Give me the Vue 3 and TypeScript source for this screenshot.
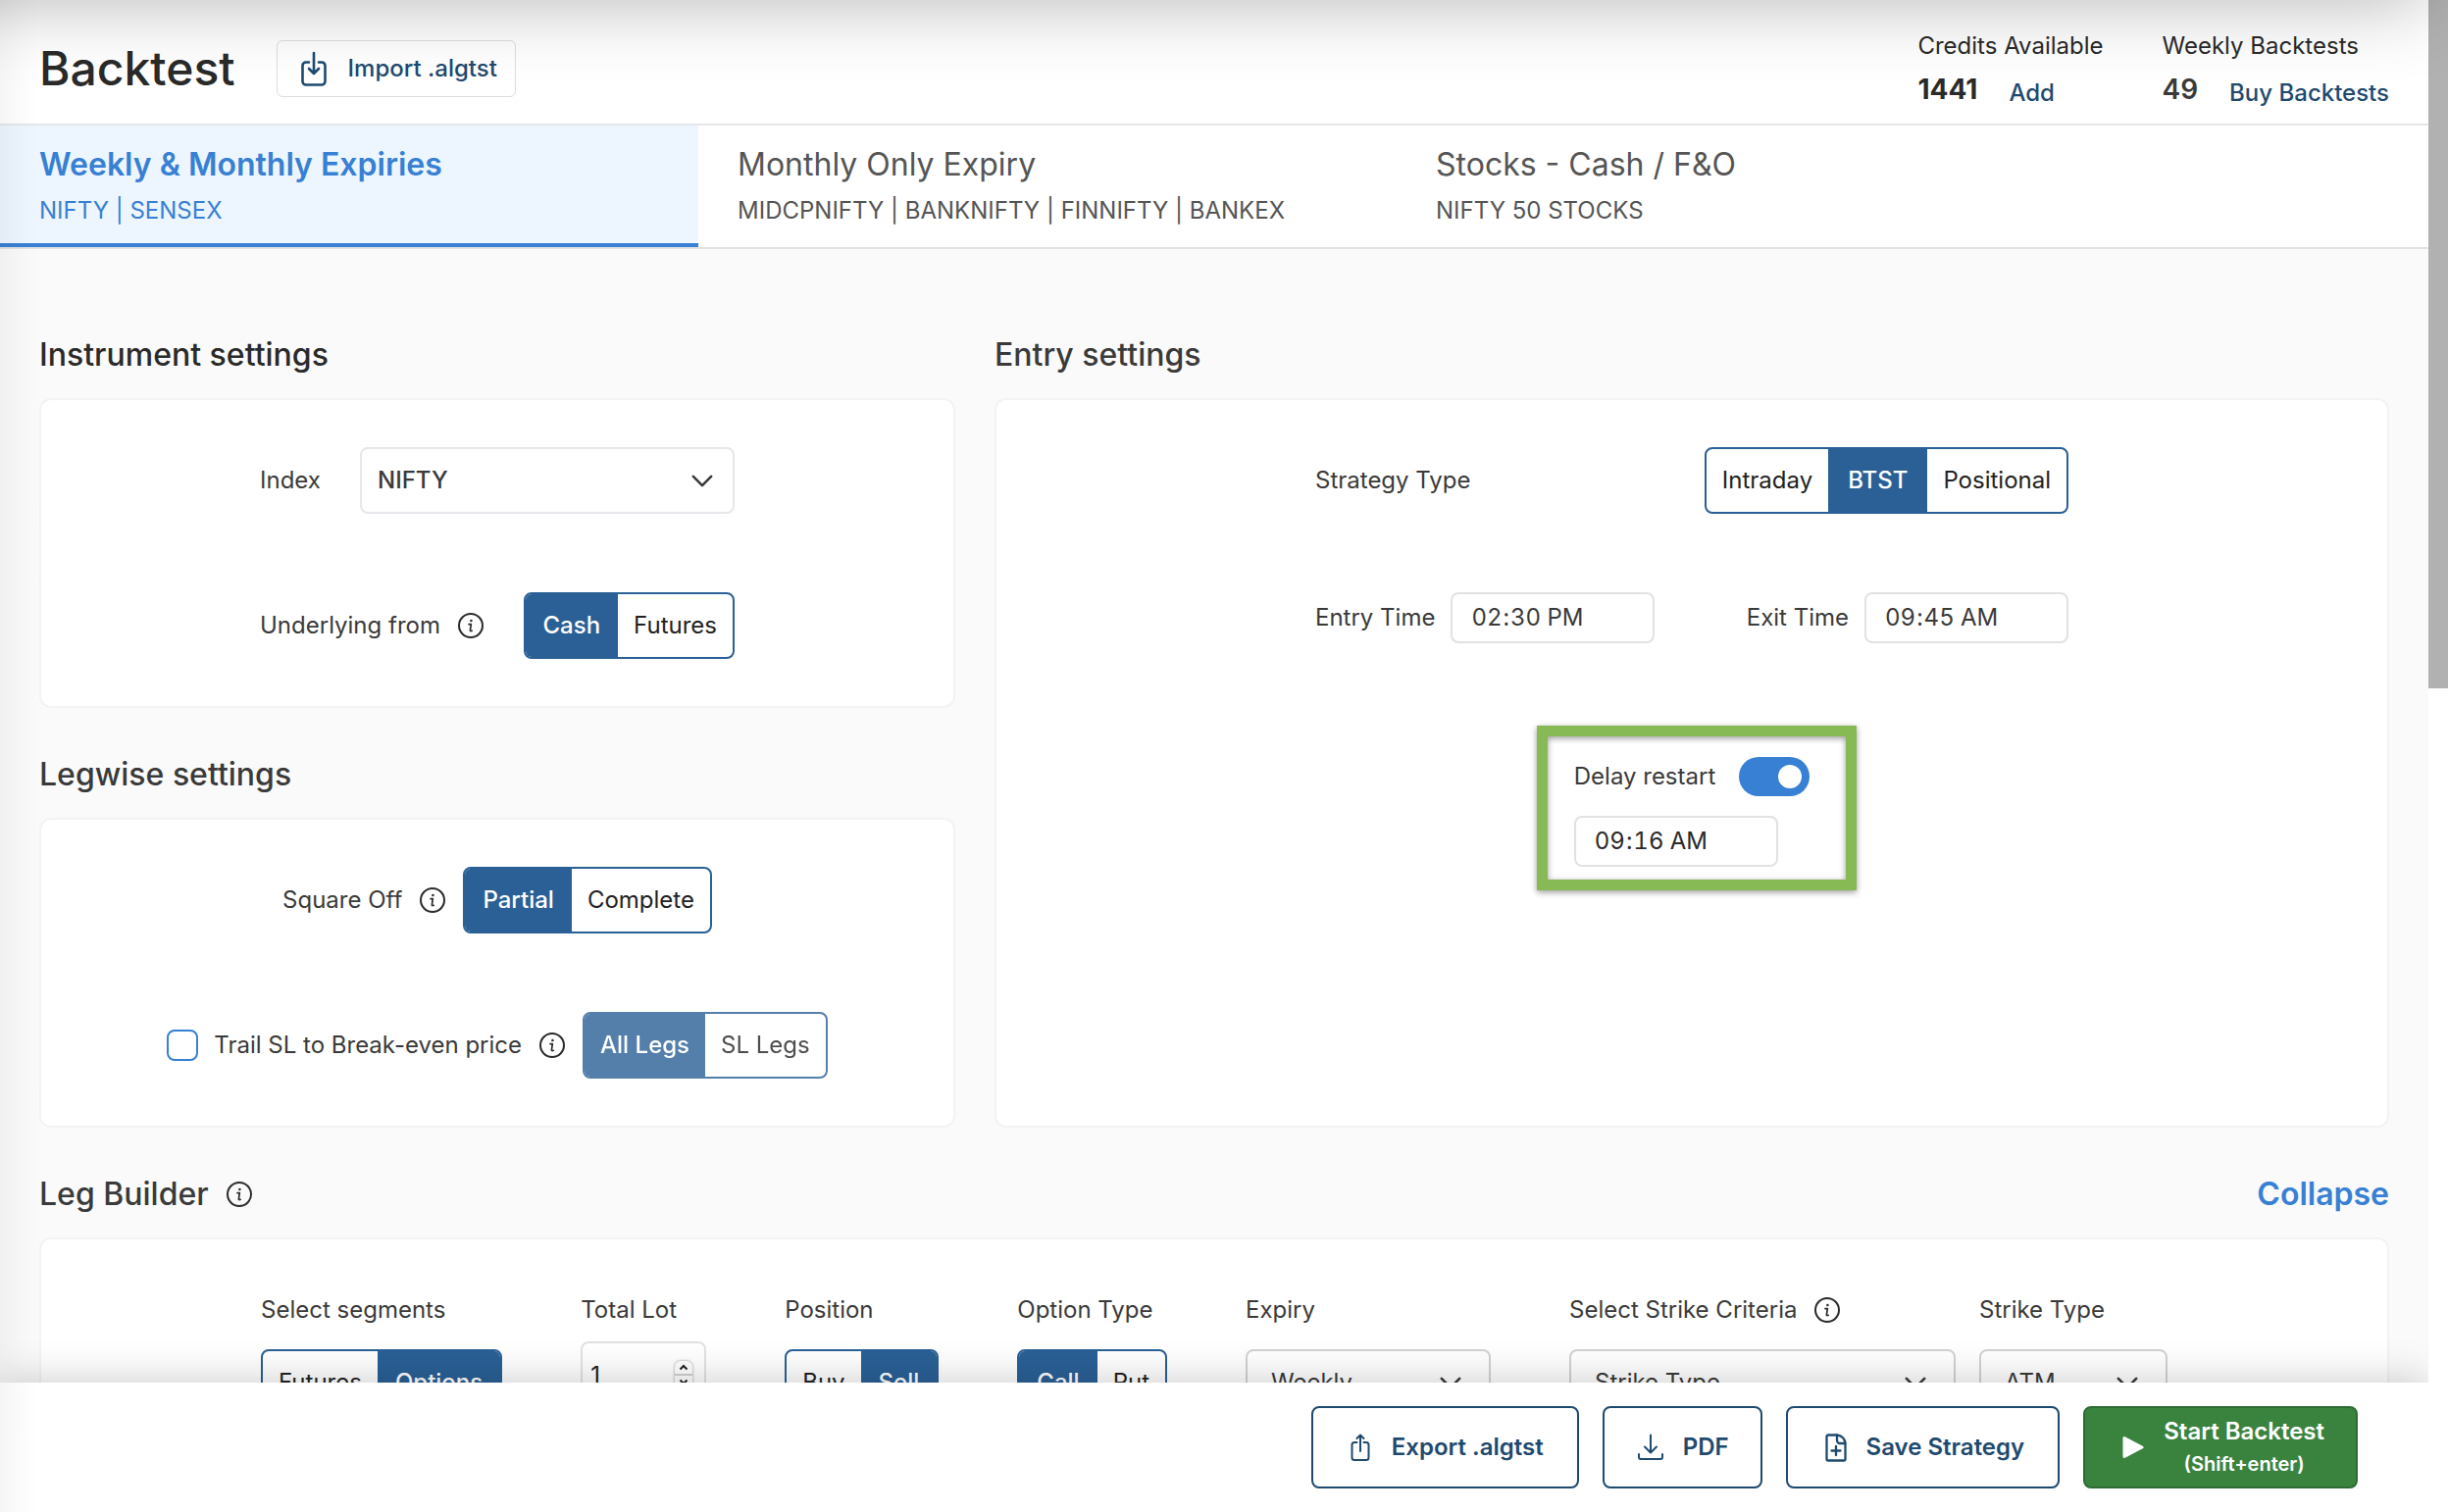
<script setup lang="ts">
import { ref } from 'vue'

interface Tab {
  title: string
  markets: string
}

const tabs: Tab[] = [
  { title: 'Weekly & Monthly Expiries', markets: 'NIFTY | SENSEX' },
  { title: 'Monthly Only Expiry', markets: 'MIDCPNIFTY | BANKNIFTY | FINNIFTY | BANKEX' },
  { title: 'Stocks - Cash / F&O', markets: 'NIFTY 50 STOCKS' },
]
const activeTab = ref(0)

const indexName = ref('NIFTY')
const underlying = ref('Cash')
const squareOff = ref('Partial')
const trailToBreakEven = ref(false)
const trailLegs = ref('All Legs')

const strategyType = ref('BTST')
const entryTime = ref('14:30')
const exitTime = ref('09:45')
const delayRestart = ref(true)
const restartTime = ref('09:16')

const segment = ref('Options')
const totalLot = ref(1)
const position = ref('Sell')
const optionType = ref('Call')
const expiry = ref('Weekly')
const strikeCriteria = ref('Strike Type')
const strikeType = ref('ATM')
</script>

<template>
  <div class="app">
    <svg class="sprite" aria-hidden="true">
      <symbol id="icon-info" viewBox="0 0 26 26">
        <circle cx="13" cy="13" r="12" fill="none" stroke="currentColor" stroke-width="2" />
        <circle cx="13.4" cy="8" r="1.3" fill="currentColor" />
        <path d="M11 11.6h2.3l-.9 6.2q-.2 1.2 1.8.5" fill="none" stroke="currentColor" stroke-width="1.7" stroke-linecap="round" stroke-linejoin="round" />
      </symbol>
      <symbol id="icon-chevron" viewBox="0 0 24 14">
        <path d="M2 2l10 10L22 2" fill="none" stroke="currentColor" stroke-width="2.8" stroke-linecap="round" stroke-linejoin="round" />
      </symbol>
    </svg>

    <div class="page">
      <div class="content">
        <header class="header">
          <div class="header-title">
            <h1>Backtest</h1>
            <button type="button" class="import">
              <svg width="26" height="36" viewBox="0 0 26 36" aria-hidden="true">
                <g fill="none" stroke="currentColor" stroke-width="2.6" stroke-linecap="round" stroke-linejoin="round">
                  <path d="M8 11.5H5a3.500 3.500 0 0 0-3.500 3.500v16A3.500 3.500 0 0 0 5 34.500h16a3.500 3.500 0 0 0 3.500-3.500V15a3.500 3.500 0 0 0-3.500-3.500h-3" />
                  <path d="M13 2v21M8 18l5 5 5-5" />
                </g>
              </svg>
              Import .algtst
            </button>
          </div>
          <div class="balances">
            <div class="balance">
              <span>Credits Available</span>
              <div class="balance-line"><strong>1441</strong><a href="#credits">Add</a></div>
            </div>
            <div class="balance">
              <span>Weekly Backtests</span>
              <div class="balance-line"><strong class="soft">49</strong><a href="#backtests">Buy Backtests</a></div>
            </div>
          </div>
        </header>

        <nav class="tabs" aria-label="Expiry type">
          <button
            v-for="(tab, i) in tabs"
            :key="tab.title"
            type="button"
            class="tab"
            :class="{ active: activeTab === i }"
            @click="activeTab = i"
          >
            <span class="tab-title">{{ tab.title }}</span>
            <span class="tab-markets">{{ tab.markets }}</span>
          </button>
        </nav>

        <main class="main">
          <div class="settings">
            <div class="column">
              <section>
                <h2 class="dark">Instrument settings</h2>
                <div class="card rows">
                  <div class="row spread narrow">
                    <label for="index">Index</label>
                    <div class="select index-select">
                      <select id="index" v-model="indexName">
                        <option>NIFTY</option>
                        <option>SENSEX</option>
                      </select>
                      <svg class="chevron" aria-hidden="true"><use href="#icon-chevron" /></svg>
                    </div>
                  </div>
                  <div class="row spread narrow">
                    <span id="underlying" class="with-info">Underlying from <svg class="info" aria-hidden="true"><use href="#icon-info" /></svg></span>
                    <div class="segmented" role="group" aria-labelledby="underlying">
                      <button v-for="o in ['Cash', 'Futures']" :key="o" type="button" :class="{ on: underlying === o }" @click="underlying = o">{{ o }}</button>
                    </div>
                  </div>
                </div>
              </section>

              <section>
                <h2>Legwise settings</h2>
                <div class="card rows">
                  <div class="row">
                    <span id="square-off" class="with-info">Square Off <svg class="info" aria-hidden="true"><use href="#icon-info" /></svg></span>
                    <div class="segmented" role="group" aria-labelledby="square-off">
                      <button v-for="o in ['Partial', 'Complete']" :key="o" type="button" :class="{ on: squareOff === o }" @click="squareOff = o">{{ o }}</button>
                    </div>
                  </div>
                  <div class="row">
                    <div class="with-info">
                      <label class="check"><input v-model="trailToBreakEven" type="checkbox" />Trail SL to Break-even price</label>
                      <svg class="info" aria-hidden="true"><use href="#icon-info" /></svg>
                    </div>
                    <div class="segmented" :class="{ faded: !trailToBreakEven }" role="group" aria-label="Legs to trail">
                      <button v-for="o in ['All Legs', 'SL Legs']" :key="o" type="button" :disabled="!trailToBreakEven" :class="{ on: trailLegs === o }" @click="trailLegs = o">{{ o }}</button>
                    </div>
                  </div>
                </div>
              </section>
            </div>

            <section class="entry">
              <h2>Entry settings</h2>
              <div class="card rows">
                <div class="row spread wide">
                  <span id="strategy">Strategy Type</span>
                  <div class="segmented" role="group" aria-labelledby="strategy">
                    <button v-for="o in ['Intraday', 'BTST', 'Positional']" :key="o" type="button" :class="{ on: strategyType === o }" @click="strategyType = o">{{ o }}</button>
                  </div>
                </div>
                <div class="row spread wide">
                  <label class="time-field">Entry Time<input v-model="entryTime" class="time" type="time" /></label>
                  <label class="time-field">Exit Time<input v-model="exitTime" class="time" type="time" /></label>
                </div>
                <div class="delay">
                  <label class="delay-label">Delay restart<input v-model="delayRestart" class="switch" type="checkbox" role="switch" /></label>
                  <input v-model="restartTime" class="time dark" type="time" aria-label="Restart time" />
                  <span class="highlight"></span>
                </div>
              </div>
            </section>
          </div>

          <section>
            <div class="section-head">
              <h2 class="with-info">Leg Builder <svg class="info" aria-hidden="true"><use href="#icon-info" /></svg></h2>
              <button type="button" class="collapse">Collapse</button>
            </div>
            <div class="card legs">
              <div class="field">
                <span id="segment">Select segments</span>
                <div class="segmented" role="group" aria-labelledby="segment">
                  <button v-for="o in ['Futures', 'Options']" :key="o" type="button" :class="{ on: segment === o }" @click="segment = o">{{ o }}</button>
                </div>
              </div>
              <div class="field tight">
                <label for="lots">Total Lot</label>
                <div class="number">
                  <input id="lots" v-model.number="totalLot" type="number" min="1" />
                  <div class="stepper">
                    <button type="button" aria-label="Increase" @click="totalLot++"><svg viewBox="0 0 10 7" aria-hidden="true"><path d="M1.500 5.500L5 2l3.500 3.500" /></svg></button>
                    <button type="button" aria-label="Decrease" @click="totalLot--"><svg viewBox="0 0 10 7" aria-hidden="true"><path d="M1.500 1.500L5 5l3.500-3.500" /></svg></button>
                  </div>
                </div>
              </div>
              <div class="field">
                <span id="position">Position</span>
                <div class="segmented" role="group" aria-labelledby="position">
                  <button v-for="o in ['Buy', 'Sell']" :key="o" type="button" :class="{ on: position === o }" @click="position = o">{{ o }}</button>
                </div>
              </div>
              <div class="field">
                <span id="option-type">Option Type</span>
                <div class="segmented" role="group" aria-labelledby="option-type">
                  <button v-for="o in ['Call', 'Put']" :key="o" type="button" :class="{ on: optionType === o }" @click="optionType = o">{{ o }}</button>
                </div>
              </div>
              <div class="field">
                <label for="expiry">Expiry</label>
                <div class="select leg-select expiry-select">
                  <select id="expiry" v-model="expiry">
                    <option>Weekly</option>
                    <option>Monthly</option>
                  </select>
                  <svg class="chevron" aria-hidden="true"><use href="#icon-chevron" /></svg>
                </div>
              </div>
              <div class="field-pair">
                <div class="field">
                  <label for="criteria" class="with-info">Select Strike Criteria <svg class="info" aria-hidden="true"><use href="#icon-info" /></svg></label>
                  <div class="select leg-select criteria-select">
                    <select id="criteria" v-model="strikeCriteria">
                      <option>Strike Type</option>
                      <option>Premium Range</option>
                    </select>
                    <svg class="chevron" aria-hidden="true"><use href="#icon-chevron" /></svg>
                  </div>
                </div>
                <div class="field">
                  <label for="strike">Strike Type</label>
                  <div class="select leg-select strike-select">
                    <select id="strike" v-model="strikeType">
                      <option>ATM</option>
                      <option>ITM1</option>
                      <option>OTM1</option>
                    </select>
                    <svg class="chevron" aria-hidden="true"><use href="#icon-chevron" /></svg>
                  </div>
                </div>
              </div>
            </div>
          </section>
        </main>
      </div>

      <footer class="actions">
        <button type="button" class="action file">
          <svg width="22" height="28" viewBox="0 0 22 28" aria-hidden="true">
            <g fill="none" stroke="currentColor" stroke-width="2" stroke-linecap="round" stroke-linejoin="round">
              <path d="M6.500 9H4a2.500 2.500 0 0 0-2.500 2.500v13A2.500 2.500 0 0 0 4 27h12a2.500 2.500 0 0 0 2.500-2.500v-13A2.500 2.500 0 0 0 16 9h-2.500" />
              <path d="M10 18V1.500M6.500 5L10 1.500 13.500 5" />
            </g>
          </svg>
          Export .algtst
        </button>
        <button type="button" class="action">
          <svg width="26" height="28" viewBox="0 0 26 28" aria-hidden="true">
            <g fill="none" stroke="currentColor" stroke-width="2" stroke-linecap="round" stroke-linejoin="round">
              <path d="M1 21v3a2 2 0 0 0 2 2h20a2 2 0 0 0 2-2v-3" />
              <path d="M13 1.500v18M7 13.500l6 6 6-6" />
            </g>
          </svg>
          PDF
        </button>
        <button type="button" class="action file">
          <svg width="22" height="29" viewBox="0 0 22 29" aria-hidden="true">
            <g fill="none" stroke="currentColor" stroke-width="2.300" stroke-linecap="round" stroke-linejoin="round">
              <path d="M12 1.500H3A1.500 1.500 0 0 0 1.500 3v23A1.500 1.500 0 0 0 3 27.500h16a1.500 1.500 0 0 0 1.500-1.500V10.500A9 9 0 0 0 12 1.500z" />
              <path d="M12 1.500v5.500a3 3 0 0 0 3 3h5.500M11 13v9M6.500 17.500h9" />
            </g>
          </svg>
          Save Strategy
        </button>
        <button type="button" class="action start">
          <svg width="22" height="24" viewBox="0 0 22 24" aria-hidden="true">
            <path d="M2 2.500v19L20 12z" fill="currentColor" stroke="currentColor" stroke-width="3" stroke-linejoin="round" />
          </svg>
          <span class="start-text">Start Backtest<small>(Shift+enter)</small></span>
        </button>
      </footer>
    </div>

    <div class="scrollbar" aria-hidden="true"><div class="thumb"></div></div>
    <div class="top-shade" aria-hidden="true"></div>
    <div class="side-shade" aria-hidden="true"></div>
  </div>
</template>

<style>
body {
  margin: 0;
  overflow: hidden;
}
</style>

<style scoped>
.app {
  position: relative;
  display: flex;
  height: 100vh;
  overflow: hidden;
  background: #fafafa;
  color: #3a3a3a;
  font-family: Inter, "Liberation Sans", sans-serif;
  font-size: 24px;
  line-height: 36px;
}

.app *,
.app {
  box-sizing: border-box;
}

button,
input,
select {
  margin: 0;
  padding: 0;
  border: 0;
  background: none;
  color: inherit;
  font: inherit;
}

.sprite {
  position: absolute;
  width: 0;
  height: 0;
}

.page {
  display: flex;
  flex: 1;
  flex-direction: column;
  min-width: 0;
}

.content {
  flex: 1;
  min-height: 0;
  overflow: hidden;
}

/* Header */
.header {
  display: flex;
  align-items: center;
  justify-content: space-between;
  height: 128px;
  padding: 14px 40px 0;
  border-bottom: 2px solid #e5e7eb;
  background: #fff;
}

.header-title {
  display: flex;
  align-items: center;
  gap: 42px;
  color: #2a2a2a;
}

h1 {
  margin: 0;
  font-size: 48px;
  font-weight: 500;
  line-height: 56px;
}

.import {
  display: flex;
  align-items: center;
  gap: 22px;
  height: 58px;
  padding: 0 18px 0 24px;
  border: 1px solid #dedede;
  border-radius: 6px;
  color: #1f4a6f;
  font-weight: 500;
}

.balances {
  display: flex;
  gap: 60px;
  color: #2a2a2a;
}

.balance-line {
  display: flex;
  align-items: flex-end;
  gap: 32px;
  margin-top: 6px;
}

.balance strong {
  font-size: 28px;
  font-weight: 700;
  line-height: 40px;
}

.balance strong.soft {
  color: #3a3a3a;
  font-weight: 600;
}

.balance a {
  color: #1f4a6f;
  font-weight: 500;
  line-height: 32px;
  text-decoration: none;
}

/* Tabs */
.tabs {
  display: flex;
  border-bottom: 2px solid #e2e2e2;
  background: #fff;
}

.tab {
  display: flex;
  flex: 0 1 712px;
  flex-direction: column;
  gap: 9px;
  height: 124px;
  padding: 20px 40px 0;
  border-bottom: 4px solid transparent;
  color: #555;
  text-align: left;
}

.tab.active {
  border-bottom-color: #3880d4;
  background: #edf6ff;
  color: #3880d4;
}

.tab-title {
  font-size: 32px;
  line-height: 40px;
}

.active .tab-title {
  font-weight: 600;
}

/* Settings */
.main {
  display: flex;
  flex-direction: column;
  gap: 48px;
  padding: 88px 40px 0;
}

.settings {
  display: grid;
  grid-template-columns: 934fr 1422fr;
  gap: 40px;
}

.column {
  display: flex;
  flex-direction: column;
  gap: 48px;
}

.entry {
  display: flex;
  flex-direction: column;
}

.entry .card {
  flex: 1;
}

h2 {
  margin: 0 0 24px;
  font-size: 32px;
  font-weight: 500;
  line-height: 40px;
}

h2.dark {
  color: #2a2a2a;
}

.card {
  border: 2px solid #f3f3f3;
  border-radius: 12px;
  background: #fff;
}

.rows {
  display: flex;
  flex-direction: column;
  align-items: center;
  gap: 80px;
  padding: 48px;
}

.row {
  display: flex;
  align-items: center;
  gap: 18px;
}

.spread {
  justify-content: space-between;
}

.narrow {
  width: 484px;
}

.wide {
  width: 768px;
}

.with-info {
  display: flex;
  align-items: center;
  gap: 18px;
}

.info {
  flex: none;
  width: 26px;
  height: 26px;
  color: #2a2a2a;
}

.check {
  display: flex;
  align-items: center;
  gap: 16px;
}

.check input {
  width: 32px;
  height: 32px;
  border: 2px solid #3880d4;
  border-radius: 8px;
  appearance: none;
}

.check input:checked {
  background: #3880d4;
}

.segmented {
  display: flex;
  height: 68px;
  overflow: hidden;
  border: 2px solid #2a6096;
  border-radius: 8px;
  background: #fff;
  color: #222;
}

.segmented button {
  padding: 0 16px;
}

.segmented .on {
  padding: 0 18px;
  background: #2a6096;
  color: #fff;
  font-weight: 500;
}

.segmented .on:not(:first-child):not(:last-child) {
  padding: 0 20px;
}

.segmented.faded {
  opacity: 0.8;
}

.segmented.faded .on {
  padding: 0 16px;
}

.select {
  position: relative;
  height: 68px;
}

.select select {
  width: 100%;
  height: 100%;
  padding: 0 16px;
  border: 2px solid #e5e7eb;
  border-radius: 8px;
  background: #fff;
  appearance: none;
}

.chevron {
  position: absolute;
  top: 28px;
  right: 22px;
  width: 22px;
  height: 13px;
  pointer-events: none;
}

.index-select {
  width: 382px;
}

.index-select select {
  font-weight: 500;
}

.leg-select select {
  padding: 0 24px;
  border-color: #d2d2d2;
}

.leg-select .chevron {
  right: 30px;
}

.time-field {
  display: flex;
  align-items: center;
  gap: 16px;
}

.time {
  width: 208px;
  height: 52px;
  padding: 0 18px;
  border: 2px solid #e2e2e2;
  border-radius: 8px;
  background: #fff;
  font-variant-numeric: tabular-nums;
}

.time.dark {
  color: #2a2a2a;
}

.time::-webkit-calendar-picker-indicator {
  display: none;
}

.delay {
  position: relative;
  display: flex;
  flex-direction: column;
  align-items: flex-start;
  gap: 20px;
  margin-top: 36px;
}

.delay-label {
  display: flex;
  align-items: center;
  gap: 24px;
}

.switch {
  display: flex;
  align-items: center;
  width: 72px;
  height: 40px;
  padding: 8px;
  border-radius: 20px;
  background: #c4c4c4;
  appearance: none;
}

.switch::before {
  width: 24px;
  height: 24px;
  border-radius: 50%;
  background: #fff;
  content: "";
}

.switch:checked {
  justify-content: flex-end;
  background: #3880d4;
}

.highlight {
  position: absolute;
  inset: -32px -48px -24px -38px;
  border: 11px solid #87b955;
  filter: drop-shadow(0 2px 3px rgba(0, 0, 0, 0.4));
  pointer-events: none;
}

/* Leg builder */
.section-head {
  display: flex;
  align-items: flex-start;
  justify-content: space-between;
}

.collapse {
  color: #3880d4;
  font-size: 32px;
  font-weight: 600;
  line-height: 40px;
}

.legs {
  display: flex;
  justify-content: center;
  gap: 80px;
  padding: 54px 48px;
}

.field-pair {
  display: flex;
  gap: 24px;
}

.field {
  display: flex;
  flex-direction: column;
  align-items: flex-start;
  gap: 22px;
}

.field.tight {
  gap: 14px;
}

.number {
  position: relative;
  width: 128px;
  height: 68px;
}

.number input {
  width: 100%;
  height: 100%;
  padding: 0 8px;
  border: 2px solid #e2e2e2;
  border-radius: 8px;
  color: #222;
  appearance: textfield;
}

.number input::-webkit-inner-spin-button {
  display: none;
}

.stepper {
  position: absolute;
  top: 20px;
  right: 14px;
  display: flex;
  flex-direction: column;
  width: 18px;
  height: 28px;
  border-radius: 6px;
  background: #fff;
  box-shadow: 0 0 3px rgba(0, 0, 0, 0.4);
}

.stepper button {
  display: flex;
  flex: 1;
  align-items: center;
  justify-content: center;
}

.stepper button + button {
  border-top: 2px solid #d0d0d0;
}

.stepper svg {
  width: 10px;
  height: 7px;
  fill: none;
  stroke: #222;
  stroke-width: 2;
}

.expiry-select {
  width: 250px;
}

.criteria-select {
  width: 394px;
}

.strike-select {
  width: 192px;
}

/* Bottom actions */
.actions {
  position: relative;
  display: flex;
  justify-content: flex-end;
  gap: 24px;
  padding: 24px 72px;
  background: #fff;
  box-shadow: 0 0 40px rgba(0, 0, 0, 0.22);
}

.action {
  display: flex;
  align-items: center;
  gap: 20px;
  height: 84px;
  padding: 0 32px 0 34px;
  border: 2px solid #1f4a6f;
  border-radius: 8px;
  color: #1f4a6f;
  font-weight: 600;
}

.action.file {
  padding: 0 34px 0 38px;
}

.action.start {
  padding: 0 32px 0 38px;
  border-color: #2f6b35;
  background: #3a833f;
  color: #fff;
}

.start-text {
  display: flex;
  flex-direction: column;
  align-items: center;
  line-height: 34px;
}

.start-text small {
  font-size: 20px;
  line-height: 32px;
}

/* Window chrome */
.scrollbar {
  position: relative;
  flex: none;
  width: 20px;
  background: #fff;
}

.thumb {
  height: 702px;
  background: #b1b1b1;
}

.top-shade {
  position: absolute;
  top: -200px;
  right: 20px;
  left: -200px;
  height: 200px;
  box-shadow: 0 0 80px rgba(0, 0, 0, 0.3);
  pointer-events: none;
}

.side-shade {
  position: absolute;
  top: 0;
  bottom: 0;
  left: 0;
  width: 40px;
  background: linear-gradient(to right, rgba(0, 0, 0, 0.04), rgba(0, 0, 0, 0.01) 60%, transparent);
  pointer-events: none;
}
</style>
